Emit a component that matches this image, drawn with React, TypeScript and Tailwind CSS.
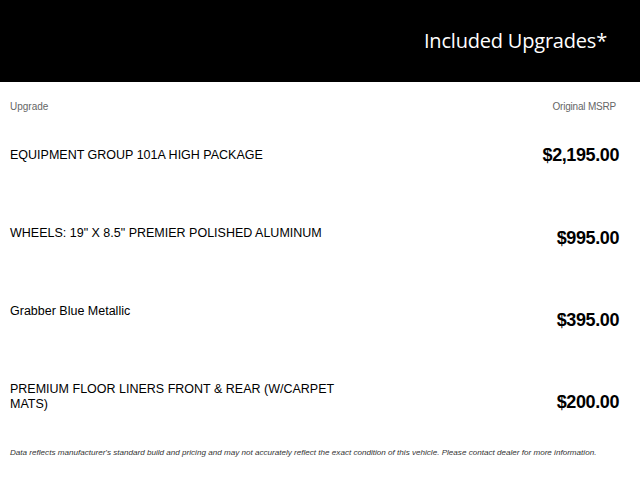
const upgrades = [
  { name: "EQUIPMENT GROUP 101A HIGH PACKAGE", price: "$2,195.00", priceClass: "-mt-[4px]" },
  { name: 'WHEELS: 19" X 8.5" PREMIER POLISHED ALUMINUM', price: "$995.00", priceClass: "mt-[1px]" },
  { name: "Grabber Blue Metallic", price: "$395.00", priceClass: "mt-[5px]" },
  { name: "PREMIUM FLOOR LINERS FRONT & REAR (W/CARPET MATS)", price: "$200.00", priceClass: "mt-[9px]" },
];

export default function App() {
  return (
    <div className="w-[640px] h-[480px] bg-white overflow-hidden font-['Liberation_Sans',Arial,sans-serif]">
      <div className="h-[82px] bg-black flex items-center justify-end pr-[33px]">
        <h1 className="text-white text-[20px] font-['Open_Sans',sans-serif] font-normal tracking-[-0.2px]">
          Included Upgrades*
        </h1>
      </div>

      <div className="pl-[10px] pr-[21px]">
        <div className="flex justify-between pt-[18px] pr-[3px] text-[10px] leading-[13px] text-[#666]">
          <span>Upgrade</span>
          <span className="tracking-[-0.2px]">Original MSRP</span>
        </div>

        <div className="mt-[35px]">
          {upgrades.map((u) => (
            <div key={u.name} className="h-[78px] flex justify-between items-start">
              <div className="w-[330px] text-[12.5px] leading-[15px] text-black">{u.name}</div>
              <div className={`text-[18px] leading-[22px] font-bold tracking-[-0.4px] text-black ${u.priceClass}`}>
                {u.price}
              </div>
            </div>
          ))}
        </div>

        <p className="-mt-[12px] text-[8.1px] leading-[10px] italic text-[#333]">
          Data reflects manufacturer's standard build and pricing and may not accurately reflect the exact condition of this vehicle. Please contact dealer for more information.
        </p>
      </div>
    </div>
  );
}
